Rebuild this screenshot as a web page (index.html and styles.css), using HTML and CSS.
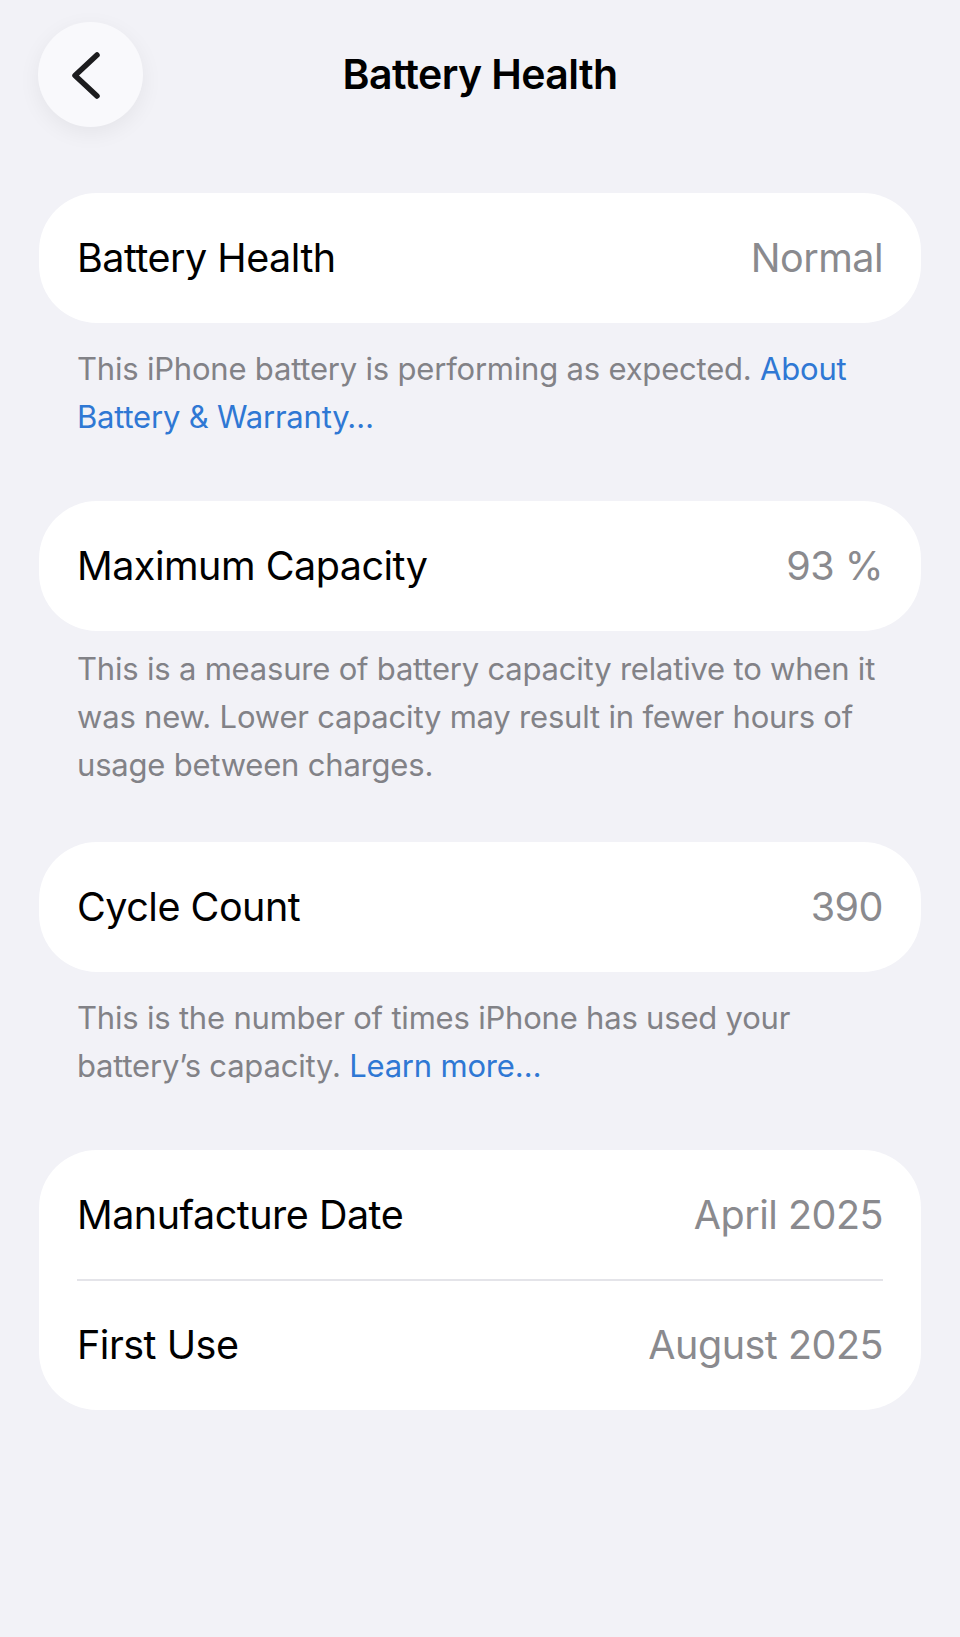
FILE: index.html
```html
<!DOCTYPE html>
<html lang="en">
<head>
<meta charset="utf-8">
<title>Battery Health</title>
<link rel="stylesheet" href="styles.css">
</head>
<body>
<header class="nav">
  <button class="back" aria-label="Back">
    <svg class="back-icon" viewBox="0 0 105 105" width="105" height="105" aria-hidden="true">
      <path d="M59 33 L37 53.5 L59 74" fill="none" stroke="#1c1c1e" stroke-width="5.5" stroke-linecap="round" stroke-linejoin="round"/>
    </svg>
  </button>
  <h1 class="title">Battery Health</h1>
  <span class="nav-spacer"></span>
</header>

<main class="content">
  <section class="group">
    <div class="card">
      <div class="row"><span class="label">Battery Health</span><span class="value">Normal</span></div>
    </div>
    <p class="footer">This iPhone battery is performing as expected. <a class="link" href="#">About</a> <a class="link" href="#">Battery &amp; Warranty…</a></p>
  </section>

  <section class="group group--compact">
    <div class="card">
      <div class="row"><span class="label">Maximum Capacity</span><span class="value">93 %</span></div>
    </div>
    <p class="footer">This is a measure of battery capacity relative to when it was new. Lower capacity may result in fewer hours of usage between charges.</p>
  </section>

  <section class="group">
    <div class="card">
      <div class="row"><span class="label">Cycle Count</span><span class="value">390</span></div>
    </div>
    <p class="footer">This is the number of times iPhone has used your <span>battery’s capacity.</span> <a class="link" href="#">Learn more…</a></p>
  </section>

  <section class="group">
    <div class="card">
      <div class="row"><span class="label">Manufacture Date</span><span class="value">April 2025</span></div>
      <div class="row"><span class="label">First Use</span><span class="value">August 2025</span></div>
    </div>
  </section>
</main>
</body>
</html>
```

FILE: styles.css
```css
* {
  box-sizing: border-box;
}

html, body {
  margin: 0;
  padding: 0;
}

body {
  background: #f2f2f7;
  font-family: Inter, "Noto Sans", "Liberation Sans", sans-serif;
  color: #000;
  min-height: 1637px;
}

.nav {
  display: grid;
  grid-template-columns: 1fr auto 1fr;
  align-items: center;
  padding: 22px 38px 0 38px;
  height: 127px;
}

.back {
  justify-self: start;
  width: 105px;
  height: 105px;
  border: none;
  padding: 0;
  border-radius: 50%;
  background: #f9f9fc;
  box-shadow: 0 6px 22px rgba(0, 0, 0, 0.06);
  display: flex;
  align-items: center;
  justify-content: center;
}

.back-icon {
  display: block;
}

.title {
  margin: 0;
  font-size: 41px;
  font-weight: 600;
  letter-spacing: -0.6px;
  line-height: 1;
}

.content {
  padding: 66px 39px 0 39px;
}

.group {
  margin-bottom: 60px;
}

.group--compact {
  margin-bottom: 53px;
}

.card {
  background: #fff;
  border-radius: 58px;
  overflow: hidden;
}

.row {
  display: flex;
  align-items: center;
  justify-content: space-between;
  height: 130px;
  padding: 0 38px;
  position: relative;
  font-size: 39.5px;
  letter-spacing: -0.5px;
}

.row + .row::before {
  content: "";
  position: absolute;
  top: -1px;
  left: 38px;
  right: 38px;
  height: 2px;
  background: #e4e4e9;
}

.label {
  color: #000;
}

.value {
  color: #8a8a8e;
}

.footer {
  margin: 22px 0 0 0;
  padding: 0 38px;
  font-size: 31px;
  line-height: 48px;
  letter-spacing: -0.2px;
  color: #828287;
}

.group--compact .footer {
  margin-top: 14px;
}

.link {
  color: #2f78d4;
  text-decoration: none;
}
```
